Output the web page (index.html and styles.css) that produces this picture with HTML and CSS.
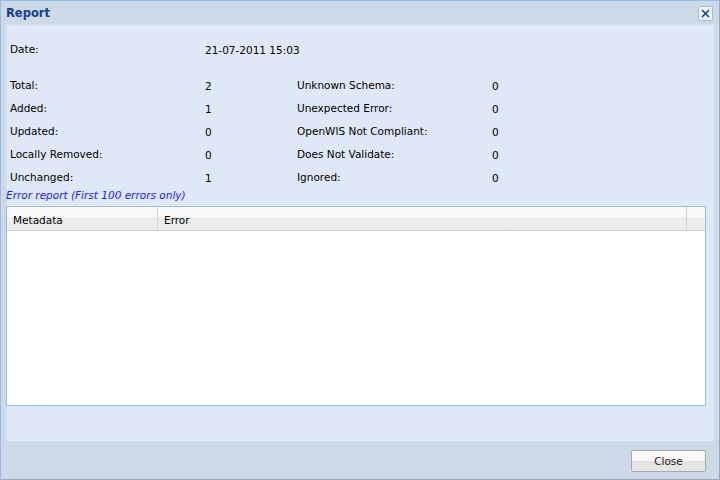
FILE: index.html
```html
<!DOCTYPE html>
<html>
<head>
<meta charset="utf-8">
<link rel="stylesheet" href="styles.css">
</head>
<body>
<div class="win">
  <div class="win-head">
    <span class="win-title">Report</span>
    <span class="tool-close"><svg width="11" height="11" viewBox="0 0 11 11"><path d="M2 2 L9 9 M9 2 L2 9" stroke="#15428b" stroke-width="1.6" fill="none"/></svg></span>
  </div>
  <div class="win-body">
    <div class="date-row">
      <span class="lbl">Date:</span>
      <span class="val">21-07-2011 15:03</span>
    </div>
    <div class="stats">
      <span class="lbl">Total:</span><span class="val">2</span><span class="lbl">Unknown Schema:</span><span class="val">0</span>
      <span class="lbl">Added:</span><span class="val">1</span><span class="lbl">Unexpected Error:</span><span class="val">0</span>
      <span class="lbl">Updated:</span><span class="val">0</span><span class="lbl">OpenWIS Not Compliant:</span><span class="val">0</span>
      <span class="lbl">Locally Removed:</span><span class="val">0</span><span class="lbl">Does Not Validate:</span><span class="val">0</span>
      <span class="lbl">Unchanged:</span><span class="val">1</span><span class="lbl">Ignored:</span><span class="val">0</span>
    </div>
    <div class="err-title">Error report (First 100 errors only)</div>
    <div class="grid">
      <div class="grid-head">
        <div class="col c1">Metadata</div>
        <div class="col c2">Error</div>
        <div class="col c3"></div>
      </div>
      <div class="grid-body"></div>
    </div>
  </div>
  <div class="win-foot">
    <button class="btn">Close</button>
  </div>
</div>
</body>
</html>
```
FILE: styles.css
```css
html, body { margin: 0; padding: 0; }
body {
  width: 720px; height: 480px; overflow: hidden;
  font-family: "DejaVu Sans", "Liberation Sans", sans-serif;
  font-size: 10.5px; color: #000;
}
.win {
  box-sizing: border-box;
  width: 720px; height: 480px;
  background: #cdd9e7;
  border: 1px solid #99bbe8;
  border-right-color: #99a8bd;
  border-bottom-color: #99a8bd;
  display: flex; flex-direction: column;
  padding: 0 5px 0 5px;
}
.win-head {
  height: 23px;
  display: flex; align-items: center; justify-content: space-between;
}
.win-title {
  font-family: "DejaVu Sans", sans-serif;
  font-weight: bold; font-size: 11.5px; color: #15428b;
}
.tool-close {
  box-sizing: border-box;
  width: 15px; height: 15px;
  border: 1px solid #a3bad9; border-radius: 2px;
  background: #f0f5fb;
  display: flex; align-items: center; justify-content: center;
  margin-right: 1px; margin-top: 1px;
}
.win-body {
  height: 417px;
  box-sizing: border-box;
  background: #dfe8f6;
  border-top: 1px solid #d6e0ee;
  box-shadow: inset 1px 0 0 #d3dfef;
  padding: 18px 0 0 0;
  display: flex; flex-direction: column;
}
.date-row {
  display: grid;
  grid-template-columns: 195px auto;
  padding-left: 4px;
  height: 24px;
}
.stats {
  margin-top: 12px;
  display: grid;
  grid-template-columns: 195px 92px 195px auto;
  grid-auto-rows: 23px;
  padding-left: 4px;
}
.stats .val, .date-row .val { padding-top: 1px; }
.err-title {
  color: #1a1aff; font-style: italic;
  margin-top: -5px; height: 13px; line-height: 13px;
  margin-bottom: 4px;
}
.grid {
  width: 700px; height: 200px;
  box-sizing: border-box;
  border: 1px solid #99bbe8;
  background: #fff;
  display: flex; flex-direction: column;
}
.grid-head {
  display: flex; height: 23px;
  background: linear-gradient(#f9f9f9 0%, #f9f9f9 40%, #ededed 50%, #ebebeb 100%);
  border-bottom: 1px solid #d0d0d0;
}
.col {
  box-sizing: border-box;
  border-right: 1px solid #d0d0d0;
  padding: 7px 0 0 6px;
}
.c1 { width: 151px; }
.c2 { width: 529px; }
.c3 { flex: 1; border-right: none; }
.win-foot {
  flex: 1;
  display: flex; justify-content: flex-end; align-items: flex-start;
  padding: 9px 8px 0 0;
}
.btn {
  width: 75px; height: 22px;
  font-family: "DejaVu Sans", sans-serif; font-size: 10.5px; color: #222;
  border: 1px solid #a8a8a8; border-radius: 2px;
  background: linear-gradient(#fbfbfb 0%, #f4f4f4 50%, #e2e2e2 51%, #e6e6e6 100%);
  padding: 0; margin: 0;
}
```
